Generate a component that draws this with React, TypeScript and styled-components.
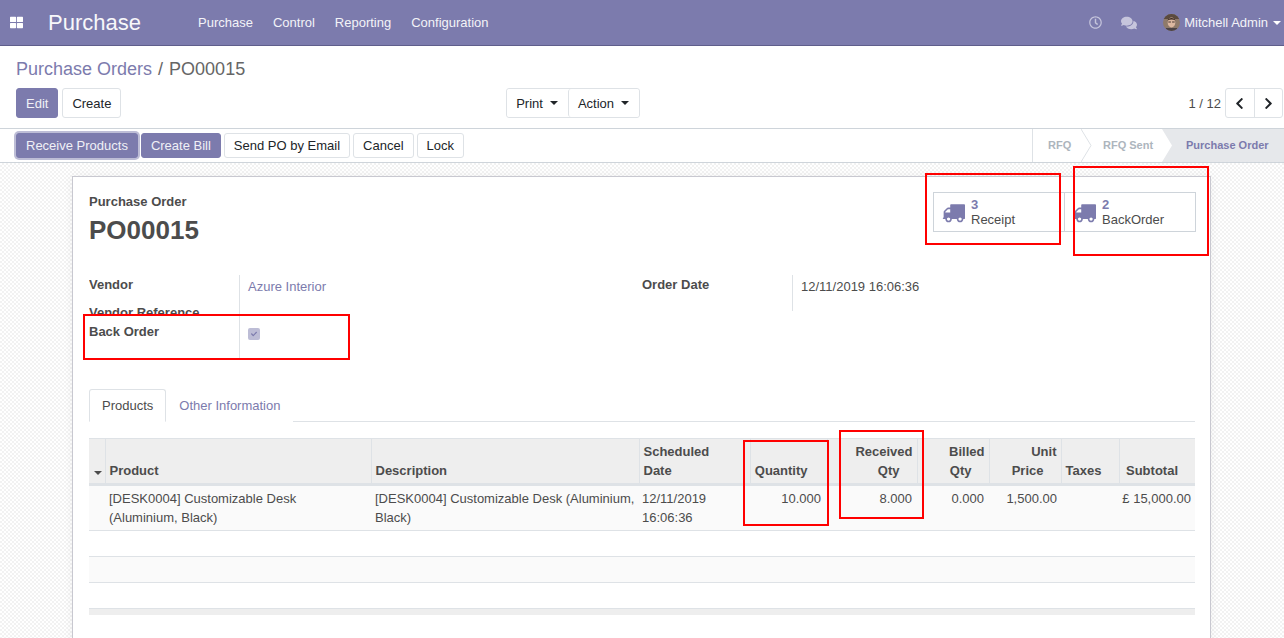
import React from "react";
import styled, { createGlobalStyle } from "styled-components";
import { FaThLarge, FaRegClock, FaComments, FaChevronLeft, FaChevronRight, FaCheck } from "react-icons/fa";

const Global = createGlobalStyle`
  html, body { margin: 0; padding: 0; height: 100%; overflow: hidden; }
  body { font-family: "Liberation Sans", Arial, sans-serif; font-size: 13px; line-height: 19px; color: #4c4c4c; background: #fff; }
  #root { height: 100%; }
  * { box-sizing: border-box; }
`;

const primary = "#7c7bad";

const Page = styled.div`
  position: relative;
  width: 1284px;
  height: 638px;
  overflow: hidden;
  display: flex;
  flex-direction: column;
`;

const Navbar = styled.header`
  height: 46px;
  flex: none;
  background: ${primary};
  border-bottom: 1px solid #5f5e8b;
  color: #fff;
  display: flex;
  align-items: center;
  padding: 0 3px 0 10px;
`;
const Apps = styled.span`
  display: flex;
  font-size: 13px;
  width: 38px;
`;
const Brand = styled.span`
  font-size: 22px;
  width: 150px;
  opacity: 0.95;
`;
const Menu = styled.nav`
  display: flex;
  gap: 20px;
  flex: 1;
  color: #f3f3f8;
`;
const NavRight = styled.div`
  display: flex;
  align-items: center;
  color: #f3f3f8;
`;
const NavIcon = styled.span<{ $size: number; $gap: number }>`
  display: flex;
  color: #c6c5dc;
  font-size: ${(p) => p.$size}px;
  margin-right: ${(p) => p.$gap}px;
`;
const Avatar = styled.svg`
  width: 17px;
  height: 17px;
  border-radius: 50%;
  margin-right: 4px;
`;
const Caret = styled.span<{ $color?: string }>`
  display: inline-block;
  width: 0;
  height: 0;
  border-left: 4px solid transparent;
  border-right: 4px solid transparent;
  border-top: 4px solid ${(p) => p.$color || "#fff"};
`;
const UserCaret = styled(Caret)`
  margin-left: 5px;
`;

const ControlPanel = styled.div`
  flex: none;
  height: 83px;
  padding: 13px 0 0 16px;
  border-bottom: 1px solid #ced4da;
`;
const Breadcrumb = styled.div`
  font-size: 18px;
  line-height: 20px;
  height: 29px;
  color: #666;
`;
const Crumb = styled.span`
  color: ${primary};
`;
const CrumbSep = styled.span`
  margin: 0 1px;
`;
const Toolbar = styled.div`
  display: flex;
  height: 30px;
  position: relative;
`;
const ToolGroup = styled.div`
  display: flex;
  gap: 4px;
  width: 490px;
`;
const Btn = styled.button<{ $primary?: boolean; $h?: number; $focus?: boolean }>`
  font: inherit;
  height: ${(p) => p.$h || 30}px;
  padding: 0 9px;
  border-radius: 3px;
  border: 1px solid ${(p) => (p.$primary ? primary : "#dee2e6")};
  background: ${(p) => (p.$primary ? primary : "#fff")};
  color: ${(p) => (p.$primary ? "#f0f0f6" : "#212529")};
  box-shadow: ${(p) => (p.$focus ? "0 0 0 2px rgba(124,123,173,0.5)" : "none")};
  white-space: nowrap;
`;
const Joined = styled.div`
  display: flex;
  width: 134px;
  border: 1px solid #dee2e6;
  border-radius: 3px;
`;
const JoinedBtn = styled.button<{ $w: number }>`
  font: inherit;
  width: ${(p) => p.$w}px;
  background: #fff;
  border: 0;
  color: #212529;
  border-radius: 3px;
  display: flex;
  align-items: center;
  justify-content: center;
  gap: 7px;
  padding: 0 1px 0 0;
  & + & { border-left: 1px solid #dee2e6; }
`;
const Pager = styled.div`
  margin-left: auto;
  display: flex;
  align-items: center;
  gap: 4px;
  margin-right: 1px;
`;
const PagerBtns = styled.div`
  display: flex;
  width: 58px;
  height: 30px;
  border: 1px solid #dee2e6;
  border-radius: 3px;
`;
const PagerBtn = styled.span`
  flex: 1;
  display: flex;
  align-items: center;
  justify-content: center;
  color: #212529;
  font-size: 13px;
  & + & { border-left: 1px solid #dee2e6; }
`;

const StatusBar = styled.div`
  flex: none;
  height: 34px;
  display: flex;
  align-items: center;
  justify-content: space-between;
  border-bottom: 1px solid #ced4da;
  padding-left: 16px;
  background: #fff;
`;
const Actions = styled.div`
  display: flex;
  gap: 3px;
`;
const Steps = styled.div`
  display: flex;
  align-self: stretch;
  border-left: 1px solid #dee2e6;
  width: 252px;
`;
const Step = styled.div<{ $w: number; $pl: number; $active?: boolean }>`
  position: relative;
  width: ${(p) => p.$w}px;
  display: flex;
  align-items: center;
  font-size: 11px;
  font-weight: 700;
  color: ${(p) => (p.$active ? primary : "#adb5bd")};
  background: ${(p) => (p.$active ? "#e6e8eb" : "transparent")};
  padding-left: ${(p) => p.$pl}px;
  clip-path: ${(p) => (p.$active ? "polygon(0 0,100% 0,100% 100%,0 100%,10px 50%)" : "none")};
`;
const StepArrow = styled.svg`
  position: absolute;
  right: -11px;
  top: 0;
  width: 11px;
  height: 33px;
`;

const Content = styled.main`
  flex: 1;
  min-height: 0;
  overflow: hidden;
  padding: 13px 0 0 72px;
  background-color: #fff;
  background-image:
    linear-gradient(45deg, #f2f2f2 25%, transparent 25%, transparent 75%, #f2f2f2 75%),
    linear-gradient(45deg, #f2f2f2 25%, transparent 25%, transparent 75%, #f2f2f2 75%);
  background-size: 4px 4px;
  background-position: 0 0, 2px 2px;
`;
const Sheet = styled.section`
  width: 1139px;
  height: 600px;
  background: #fff;
  border: 1px solid #c8c8d0;
  box-shadow: 0 0 10px rgba(0, 0, 0, 0.05);
  padding: 15px 14px 0 16px;
`;
const SheetHead = styled.div`
  display: flex;
  justify-content: space-between;
  height: 83px;
`;
const TitleLabel = styled.div`
  font-weight: 700;
`;
const Title = styled.h1`
  margin: 4px 0 0;
  font-size: 26px;
  line-height: 30px;
  font-weight: 700;
`;
const StatBox = styled.div`
  display: flex;
  height: 40px;
`;
const Stat = styled.div`
  width: 132px;
  height: 40px;
  border: 1px solid #ced4da;
  display: flex;
  align-items: center;
  padding-left: 8px;
  line-height: 15px;
  & + & { margin-left: -1px; }
`;
const StatIcon = styled.svg`
  width: 23px;
  height: 23px;
  margin-right: 6px;
  flex: none;
  color: ${primary};
`;
const StatNum = styled.div`
  font-weight: 700;
  color: ${primary};
`;

const FormGrid = styled.div`
  display: flex;
  height: 114px;
`;
const FormCol = styled.div`
  width: 553px;
`;
const FormRow = styled.div<{ $h: number }>`
  display: flex;
  height: ${(p) => p.$h}px;
  overflow: hidden;
`;
const Label = styled.div<{ $pad?: number }>`
  width: 150px;
  font-weight: 700;
  padding-top: ${(p) => p.$pad || 0}px;
`;
const Value = styled.div<{ $pad?: number; $link?: boolean }>`
  flex: 1;
  border-left: 1px solid #dee2e6;
  padding: ${(p) => p.$pad || 0}px 0 0 8px;
  color: ${(p) => (p.$link ? primary : "inherit")};
`;
const Check = styled.span`
  display: flex;
  align-items: center;
  justify-content: center;
  width: 12px;
  height: 12px;
  border-radius: 2px;
  background: #bdbdd6;
  color: ${primary};
  font-size: 6px;
`;

const Tabs = styled.div`
  display: flex;
  width: 1106px;
  height: 33px;
  border-bottom: 1px solid #dee2e6;
  margin-bottom: 16px;
`;
const Tab = styled.div<{ $active?: boolean }>`
  height: 33px;
  padding: 6px 12px 0 12px;
  color: ${(p) => (p.$active ? "#4c4c4c" : primary)};
  background: #fff;
  border: 1px solid ${(p) => (p.$active ? "#dee2e6" : "transparent")};
  border-bottom-color: ${(p) => (p.$active ? "#fff" : "transparent")};
  border-radius: 3px 3px 0 0;
`;

const Table = styled.table`
  border-collapse: collapse;
  table-layout: fixed;
  width: 1106px;
`;
const Th = styled.th<{ $right?: boolean; $pr?: number }>`
  background: #eeeeee;
  border-top: 1px solid #dee2e6;
  border-left: 1px solid #dee2e6;
  border-bottom: 3px solid #dee2e6;
  padding: 3px ${(p) => p.$pr ?? 4}px 3px 4px;
  font-weight: 700;
  text-align: ${(p) => (p.$right ? "right" : "left")};
  vertical-align: bottom;
  &:first-child { border-left: 0; padding-left: 5px; padding-right: 0; }
`;
const SortGap = styled.span`
  display: inline-block;
  width: 13px;
`;
const Td = styled.td<{ $right?: boolean; $pl?: number; $pr?: number }>`
  padding: 3px ${(p) => p.$pr ?? 3}px 3px ${(p) => p.$pl ?? 3}px;
  vertical-align: top;
  text-align: ${(p) => (p.$right ? "right" : "left")};
  overflow: hidden;
`;
const ProductName = styled.div`
  max-width: 200px;
`;
const Row = styled.tr<{ $odd?: boolean; $h?: number }>`
  background: ${(p) => (p.$odd ? "#fafafa" : "#fff")};
  border-bottom: 1px solid #dee2e6;
  height: ${(p) => p.$h || 26}px;
`;
const Foot = styled.div`
  width: 1106px;
  height: 6px;
  background: #eeeeee;
`;

const Mark = styled.div<{ $x: number; $y: number; $w: number; $h: number }>`
  position: absolute;
  left: ${(p) => p.$x}px;
  top: ${(p) => p.$y}px;
  width: ${(p) => p.$w}px;
  height: ${(p) => p.$h}px;
  border: 2px solid #ff0000;
  pointer-events: none;
`;

const Truck = () => (
  <StatIcon viewBox="0 0 1792 1792">
    <path
      fill="currentColor"
      d="M640 1408q0-52-38-90t-90-38-90 38-38 90 38 90 90 38 90-38 38-90zm-384-512h384v-256h-158q-13 0-22 9l-195 195q-9 9-9 22v30zm1280 512q0-52-38-90t-90-38-90 38-38 90 38 90 90 38 90-38 38-90zm256-1088v1024q0 15-4 26.5t-13.5 18.5-16.5 11.5-23.5 6-22.5 2-25.5 0-22.5-.5q0 106-75 181t-181 75-181-75-75-181h-384q0 106-75 181t-181 75-181-75-75-181h-64q-3 0-22.5.5t-25.5 0-22.5-2-23.5-6-16.5-11.5-13.5-18.5-4-26.5q0-26 19-45t45-19v-320q0-8-.5-35t0-38 2.5-34.5 6.5-37 14-30.5 22.5-30l198-198q19-19 50.5-32t58.5-13h160v-192q0-26 19-45t45-19h1024q26 0 45 19t19 45z"
    />
  </StatIcon>
);

const columns = [16, 266, 268, 111, 77, 90, 72, 72, 58, 76];
const emptyRows = [false, true, false];

export default function App() {
  return (
    <Page>
      <Global />
      <Navbar>
        <Apps><FaThLarge /></Apps>
        <Brand>Purchase</Brand>
        <Menu>
          <span>Purchase</span>
          <span>Control</span>
          <span>Reporting</span>
          <span>Configuration</span>
        </Menu>
        <NavRight>
          <NavIcon $size={13} $gap={19}><FaRegClock /></NavIcon>
          <NavIcon $size={16} $gap={26}><FaComments /></NavIcon>
          <Avatar viewBox="0 0 17 17">
            <rect width="17" height="17" fill="#8f7a6a" />
            <rect width="17" height="5" fill="#5a4a3e" />
            <ellipse cx="8.5" cy="8.5" rx="3.8" ry="5" fill="#dcb7a0" />
            <path d="M4.6 6.5C5 3 12 3 12.4 6.5 10 5 7 5 4.6 6.5z" fill="#3a2a22" />
            <path d="M5.3 8h2.6M9.1 8h2.6" stroke="#4a3a34" strokeWidth="1" />
            <rect x="3" y="14" width="11" height="3" fill="#4c4346" />
          </Avatar>
          <span>Mitchell Admin</span>
          <UserCaret />
        </NavRight>
      </Navbar>

      <ControlPanel>
        <Breadcrumb><Crumb>Purchase Orders</Crumb> <CrumbSep>/</CrumbSep> PO00015</Breadcrumb>
        <Toolbar>
          <ToolGroup>
            <Btn $primary>Edit</Btn>
            <Btn>Create</Btn>
          </ToolGroup>
          <Joined>
            <JoinedBtn $w={61}>Print <Caret $color="#212529" /></JoinedBtn>
            <JoinedBtn $w={71}>Action <Caret $color="#212529" /></JoinedBtn>
          </Joined>
          <Pager>
            <span>1 / 12</span>
            <PagerBtns>
              <PagerBtn><FaChevronLeft /></PagerBtn>
              <PagerBtn><FaChevronRight /></PagerBtn>
            </PagerBtns>
          </Pager>
        </Toolbar>
      </ControlPanel>

      <StatusBar>
        <Actions>
          <Btn $primary $h={25} $focus>Receive Products</Btn>
          <Btn $primary $h={25}>Create Bill</Btn>
          <Btn $h={25}>Send PO by Email</Btn>
          <Btn $h={25}>Cancel</Btn>
          <Btn $h={25}>Lock</Btn>
        </Actions>
        <Steps>
          <Step $w={48} $pl={15}>RFQ<StepArrow viewBox="0 0 11 33"><path d="M0 0l10 16.5L0 33" fill="#fff" stroke="#dee2e6" /></StepArrow></Step>
          <Step $w={81} $pl={22}>RFQ Sent</Step>
          <Step $w={122} $pl={24} $active>Purchase Order</Step>
        </Steps>
      </StatusBar>

      <Content>
        <Sheet>
          <SheetHead>
            <div>
              <TitleLabel>Purchase Order</TitleLabel>
              <Title>PO00015</Title>
            </div>
            <StatBox>
              <Stat><Truck /><div><StatNum>3</StatNum>Receipt</div></Stat>
              <Stat><Truck /><div><StatNum>2</StatNum>BackOrder</div></Stat>
            </StatBox>
          </SheetHead>

          <FormGrid>
            <FormCol>
              <FormRow $h={28}><Label>Vendor</Label><Value $link $pad={2}>Azure Interior</Value></FormRow>
              <FormRow $h={13}><Label>Vendor Reference</Label><Value /></FormRow>
              <FormRow $h={42}><Label $pad={6}>Back Order</Label><Value $pad={12}><Check><FaCheck /></Check></Value></FormRow>
            </FormCol>
            <FormCol>
              <FormRow $h={36}><Label>Order Date</Label><Value $pad={2}>12/11/2019 16:06:36</Value></FormRow>
            </FormCol>
          </FormGrid>

          <Tabs>
            <Tab $active>Products</Tab>
            <Tab>Other Information</Tab>
          </Tabs>

          <Table>
            <colgroup>
              {columns.map((w, i) => <col key={i} style={{ width: w }} />)}
            </colgroup>
            <thead>
              <tr>
                <Th><Caret $color="#4c4c4c" /></Th>
                <Th>Product</Th>
                <Th>Description</Th>
                <Th>Scheduled<br />Date</Th>
                <Th $right $pr={6}>Quantity<SortGap /></Th>
                <Th $right>Received<br />Qty<SortGap /></Th>
                <Th $right>Billed<br />Qty<SortGap /></Th>
                <Th $right>Unit<br />Price<SortGap /></Th>
                <Th>Taxes</Th>
                <Th $right>Subtotal<SortGap /></Th>
              </tr>
            </thead>
            <tbody>
              <Row $odd $h={45}>
                <Td />
                <Td $pl={4}><ProductName>[DESK0004] Customizable Desk (Aluminium, Black)</ProductName></Td>
                <Td $pl={4}>[DESK0004] Customizable Desk (Aluminium, Black)</Td>
                <Td>12/11/2019 16:06:36</Td>
                <Td $right $pr={6}>10.000</Td>
                <Td $right $pr={5}>8.000</Td>
                <Td $right $pr={5}>0.000</Td>
                <Td $right $pr={4}>1,500.00</Td>
                <Td />
                <Td $right $pr={4}>£ 15,000.00</Td>
              </Row>
              {emptyRows.map((odd, i) => (
                <Row key={i} $odd={odd}><Td colSpan={10} /></Row>
              ))}
            </tbody>
          </Table>
          <Foot />
        </Sheet>
      </Content>

      <Mark $x={925} $y={173} $w={136} $h={72} />
      <Mark $x={1073} $y={166} $w={136} $h={90} />
      <Mark $x={83} $y={314} $w={267} $h={46} />
      <Mark $x={743} $y={440} $w={86} $h={86} />
      <Mark $x={839} $y={430} $w={85} $h={89} />
    </Page>
  );
}
